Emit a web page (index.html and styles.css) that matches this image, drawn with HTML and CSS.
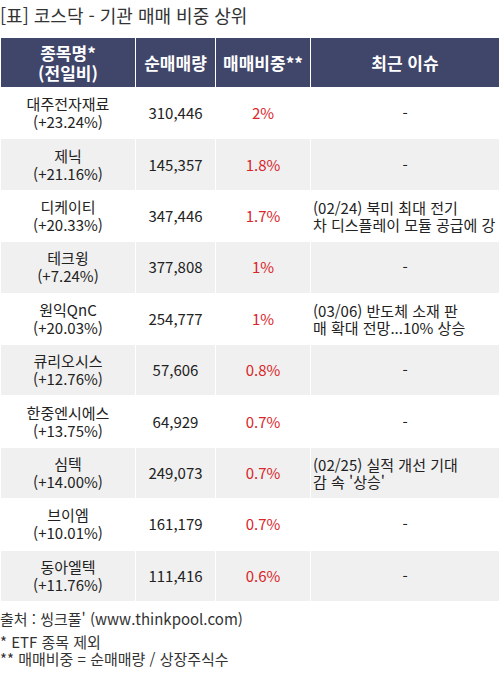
FILE: index.html
```html
<!DOCTYPE html>
<html lang="ko">
<head>
    <meta charset="UTF-8">
    <meta name="viewport" content="width=device-width, initial-scale=1.0">
    <title>[표] 코스닥 - 기관 매매 비중 상위</title>
    <link rel="stylesheet" href="styles.css">
</head>
<body>
    <div class="title">[표] 코스닥 - 기관 매매 비중 상위</div>

    <table class="rank-table">
        <colgroup>
            <col class="col-name">
            <col class="col-qty">
            <col class="col-ratio">
            <col class="col-issue">
        </colgroup>
        <thead>
            <tr>
                <th>종목명*<br>(전일비)</th>
                <th>순매매량</th>
                <th>매매비중**</th>
                <th>최근 이슈</th>
            </tr>
        </thead>
        <tbody>
            <tr>
                <td>대주전자재료<br>(+23.24%)</td>
                <td>310,446</td>
                <td class="ratio">2%</td>
                <td>-</td>
            </tr>
            <tr>
                <td>제닉<br>(+21.16%)</td>
                <td>145,357</td>
                <td class="ratio">1.8%</td>
                <td>-</td>
            </tr>
            <tr>
                <td>디케이티<br>(+20.33%)</td>
                <td>347,446</td>
                <td class="ratio">1.7%</td>
                <td class="issue">(02/24) 북미 최대 전기<br>차 디스플레이 모듈 공급에 강</td>
            </tr>
            <tr>
                <td>테크윙<br>(+7.24%)</td>
                <td>377,808</td>
                <td class="ratio">1%</td>
                <td>-</td>
            </tr>
            <tr>
                <td>원익QnC<br>(+20.03%)</td>
                <td>254,777</td>
                <td class="ratio">1%</td>
                <td class="issue">(03/06) 반도체 소재 판<br>매 확대 전망...10% 상승</td>
            </tr>
            <tr>
                <td>큐리오시스<br>(+12.76%)</td>
                <td>57,606</td>
                <td class="ratio">0.8%</td>
                <td>-</td>
            </tr>
            <tr>
                <td>한중엔시에스<br>(+13.75%)</td>
                <td>64,929</td>
                <td class="ratio">0.7%</td>
                <td>-</td>
            </tr>
            <tr>
                <td>심텍<br>(+14.00%)</td>
                <td>249,073</td>
                <td class="ratio">0.7%</td>
                <td class="issue">(02/25) 실적 개선 기대<br>감 속 '상승'</td>
            </tr>
            <tr>
                <td>브이엠<br>(+10.01%)</td>
                <td>161,179</td>
                <td class="ratio">0.7%</td>
                <td>-</td>
            </tr>
            <tr>
                <td>동아엘텍<br>(+11.76%)</td>
                <td>111,416</td>
                <td class="ratio">0.6%</td>
                <td>-</td>
            </tr>
        </tbody>
    </table>

    <div class="source">출처 : 씽크풀' (www.thinkpool.com)</div>
    <div class="notes">
        * ETF 종목 제외<br>
        ** 매매비중 = 순매매량 / 상장주식수
    </div>
</body>
</html>
```

FILE: styles.css
```css
* {
    box-sizing: border-box;
}

body {
    margin: 0;
    width: 500px;
    background: #fff;
    font-family: 'Noto Sans CJK KR', 'Noto Sans', sans-serif;
    color: #222;
}

.title {
    font-size: 18px;
    line-height: 22px;
    padding: 4px 0 0 0;
    height: 37px;
    color: #333;
}

.rank-table {
    width: 500px;
    border-collapse: separate;
    border-spacing: 1px;
    table-layout: fixed;
}

.col-name { width: 134px; }
.col-qty { width: 79px; }
.col-ratio { width: 94px; }
.col-issue { width: 188px; }

.rank-table th {
    height: 49px;
    padding: 0;
    background: #40466a;
    color: #fff;
    font-size: 17px;
    line-height: 20px;
    font-weight: bold;
    text-align: center;
}

.rank-table td {
    height: 50.4px;
    padding: 0;
    font-size: 15px;
    line-height: 18px;
    text-align: center;
    vertical-align: middle;
    white-space: nowrap;
    overflow: hidden;
}

.rank-table tbody tr:nth-child(even) td {
    background: #f0f0f0;
}

.rank-table td.ratio {
    color: #d9262b;
}

.rank-table td.issue {
    text-align: left;
    padding-left: 2px;
    font-size: 15px;
    line-height: 17px;
}

.source {
    font-size: 15px;
    line-height: 20px;
    margin-top: 7px;
    color: #333;
}

.notes {
    font-size: 15px;
    line-height: 17px;
    margin-top: 4px;
    color: #333;
}
```
